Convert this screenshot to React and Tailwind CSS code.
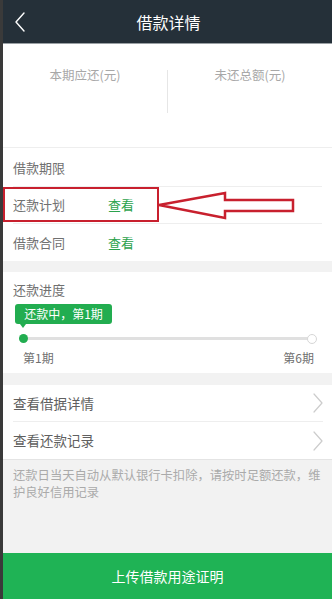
const font = { fontFamily: '"Noto Sans CJK SC", "Noto Sans", sans-serif' };

function Chevron({ className, color, width = 1.3, dir = "right" }) {
  const pts = dir === "right" ? "1,1 9,10 1,19" : "9,1 1,10 9,19";
  return (
    <svg className={className} width="10" height="20" viewBox="0 0 10 20">
      <polyline points={pts} fill="none" stroke={color} strokeWidth={width} strokeLinejoin="round" strokeLinecap="round" />
    </svg>
  );
}

function Row({ label, link, last }) {
  return (
    <div className={`flex items-center h-[37px] mx-[10px] ${last ? "" : "border-b border-[#eeeeee]"}`}>
      <span className="w-[95px] text-[13px] text-[#707070]">{label}</span>
      {link && <span className="text-[13px] text-[#2ba24c]">{link}</span>}
    </div>
  );
}

function LinkRow({ label, last }) {
  return (
    <div className={`flex items-center justify-between h-[37px] ml-[10px] mr-[9px] ${last ? "" : "border-b border-[#eeeeee]"}`}>
      <span className="text-[13.5px] text-[#606060]">{label}</span>
      <Chevron color="#cccccc" width={1.2} />
    </div>
  );
}

export default function App() {
  return (
    <div className="h-[599px] w-[332px] flex flex-col bg-[#f2f2f2] border-l-[3px] border-[#3a3a3a] overflow-hidden relative" style={font}>
      {/* header */}
      <div className="h-[44px] shrink-0 bg-[#253039] border-b border-[#9aa0a4] flex items-center relative">
        <Chevron className="absolute left-[12px] top-[12px]" color="#ffffff" width={1.4} dir="left" />
        <div className="flex-1 text-center text-white text-[16px] pl-[2px]">借款详情</div>
      </div>

      {/* summary */}
      <div className="bg-white h-[104px] shrink-0 flex border-b border-[#eeeeee]">
        <div className="flex-1 flex justify-center pt-[22px]">
          <span className="text-[12.5px] text-[#a8a8a8]">本期应还(元)</span>
        </div>
        <div className="w-px bg-[#e6e6e6] mt-[26px] h-[43px]" />
        <div className="flex-1 flex justify-center pt-[22px]">
          <span className="text-[12.5px] text-[#a8a8a8]">未还总额(元)</span>
        </div>
      </div>

      {/* info rows */}
      <div className="bg-white shrink-0 pt-[2px]">
        <Row label="借款期限" />
        <Row label="还款计划" link="查看" />
        <Row label="借款合同" link="查看" last />
      </div>

      {/* progress */}
      <div className="bg-white shrink-0 mt-[11px] h-[101px] px-[10px] pt-[8px]">
        <div className="text-[13px] text-[#707070]">还款进度</div>
        <div className="relative mt-[4px] ml-[2px] w-[97px] h-[20px] rounded-[3px] bg-[#22ad50] flex items-center justify-center text-white text-[12px]">
          还款中，第1期
          <div className="absolute left-[5px] -bottom-[4px] w-0 h-0 border-l-[3px] border-r-[3px] border-t-[4px] border-l-transparent border-r-transparent border-t-[#22ad50]" />
        </div>
        <div className="relative h-[10px] mt-[10px] mx-[10px] flex items-center">
          <div className="w-full h-[3px] bg-[#e0e0e0] rounded-full" />
          <div className="absolute -left-[4px] w-[9px] h-[9px] rounded-full bg-[#22ad50]" />
          <div className="absolute -right-[5px] w-[10px] h-[10px] rounded-full bg-white border border-[#d6d6d6]" />
        </div>
        <div className="flex justify-between mx-[10px] mt-[5px] text-[12px] text-[#707070]">
          <span>第1期</span>
          <span className="-mr-[2px]">第6期</span>
        </div>
      </div>

      {/* links */}
      <div className="bg-white shrink-0 mt-[12px] border-b border-[#e4e4e4]">
        <LinkRow label="查看借据详情" />
        <LinkRow label="查看还款记录" last />
      </div>

      {/* note */}
      <div className="flex-1 px-[10px] pt-[7px] text-[12.3px] leading-[17px] text-[#aaa]">
        还款日当天自动从默认银行卡扣除，请按时足额还款，维护良好信用记录
      </div>

      {/* button */}
      <div className="h-[46px] shrink-0 bg-[#1fb355] flex items-center justify-center text-white text-[14px]">
        上传借款用途证明
      </div>

      {/* annotation */}
      <div className="absolute left-0 top-[187px] w-[156px] h-[35px] border-[2.5px] border-[#c8202e] pointer-events-none" />
      <svg className="absolute left-0 top-0 pointer-events-none" width="332" height="599">
        <polygon
          points="156,205 222,193 222,200 290,200 290,211 222,211 222,218"
          fill="white"
          stroke="#c8202e"
          strokeWidth="2.5"
          strokeLinejoin="miter"
        />
      </svg>
    </div>
  );
}
